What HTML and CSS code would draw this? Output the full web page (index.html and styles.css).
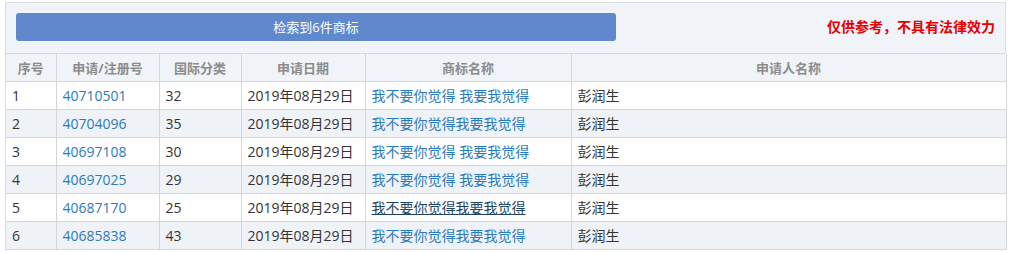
FILE: index.html
```html
<!DOCTYPE html>
<html lang="zh-CN">
<head>
<meta charset="utf-8">
<link rel="stylesheet" href="styles.css">
</head>
<body>
<div class="panel">
  <div class="toolbar">
    <div class="result-btn">检索到6件商标</div>
    <div class="notice">仅供参考，不具有法律效力</div>
  </div>
  <table class="grid">
    <colgroup>
      <col class="c1"><col class="c2"><col class="c3"><col class="c4"><col class="c5"><col class="c6">
    </colgroup>
    <thead>
      <tr><th>序号</th><th>申请/注册号</th><th>国际分类</th><th>申请日期</th><th>商标名称</th><th>申请人名称</th></tr>
    </thead>
    <tbody>
      <tr><td>1</td><td><a class="lnk">40710501</a></td><td>32</td><td>2019年08月29日</td><td><a class="lnk">我不要你觉得 我要我觉得</a></td><td>彭润生</td></tr>
      <tr><td>2</td><td><a class="lnk">40704096</a></td><td>35</td><td>2019年08月29日</td><td><a class="lnk">我不要你觉得我要我觉得</a></td><td>彭润生</td></tr>
      <tr><td>3</td><td><a class="lnk">40697108</a></td><td>30</td><td>2019年08月29日</td><td><a class="lnk">我不要你觉得 我要我觉得</a></td><td>彭润生</td></tr>
      <tr><td>4</td><td><a class="lnk">40697025</a></td><td>29</td><td>2019年08月29日</td><td><a class="lnk">我不要你觉得 我要我觉得</a></td><td>彭润生</td></tr>
      <tr><td>5</td><td><a class="lnk">40687170</a></td><td>25</td><td>2019年08月29日</td><td><a class="lnk hover">我不要你觉得我要我觉得</a></td><td>彭润生</td></tr>
      <tr><td>6</td><td><a class="lnk">40685838</a></td><td>43</td><td>2019年08月29日</td><td><a class="lnk">我不要你觉得我要我觉得</a></td><td>彭润生</td></tr>
    </tbody>
  </table>
</div>
</body>
</html>
```
FILE: styles.css
```css
html, body {
  margin: 0;
  padding: 0;
  background: #ffffff;
}
body {
  font-family: "Open Sans", "Noto Sans CJK SC", sans-serif;
  font-size: 14px;
  color: #333333;
}
.panel {
  margin: 2px 0 0 5px;
  width: 1001px;
  border: 1px solid #d9dde2;
  border-bottom: none;
  box-sizing: border-box;
  background: #f0f4f8;
}
.toolbar {
  display: flex;
  align-items: flex-start;
  justify-content: space-between;
  height: 51px;
  box-sizing: border-box;
  padding: 10px 10px 0 10px;
  border-bottom: 1px solid #d6dadf;
}
.result-btn {
  width: 600px;
  height: 28px;
  background: #6089cd;
  border-radius: 3px;
  color: #ffffff;
  font-size: 13px;
  line-height: 28px;
  text-align: center;
}
.notice {
  color: #e60000;
  font-size: 14px;
  font-weight: bold;
  line-height: 28px;
}
.grid {
  width: 1000px;
  border-collapse: collapse;
  table-layout: fixed;
}
.c1 { width: 50px; }
.c2 { width: 103px; }
.c3 { width: 82px; }
.c4 { width: 124px; }
.c5 { width: 206px; }
.c6 { width: 435px; }
.grid th, .grid td {
  height: 27px;
  padding: 0 6px;
  border: 1px solid #d3d7dc;
  white-space: nowrap;
  overflow: hidden;
}
.grid tr > :first-child { border-left: none; }
.grid th {
  border-top: none;
  background: #f0f4f8;
  color: #8c8c8c;
  font-size: 13px;
  font-weight: bold;
  text-align: center;
}
.grid td {
  text-align: left;
  line-height: 20px;
}
.grid tbody tr:nth-child(odd) td { background: #ffffff; }
.grid tbody tr:nth-child(even) td { background: #eff3f8; }
.lnk {
  color: #2b7bba;
  text-decoration: none;
}
.lnk.hover {
  color: #1e4464;
  text-decoration: underline;
}
```
